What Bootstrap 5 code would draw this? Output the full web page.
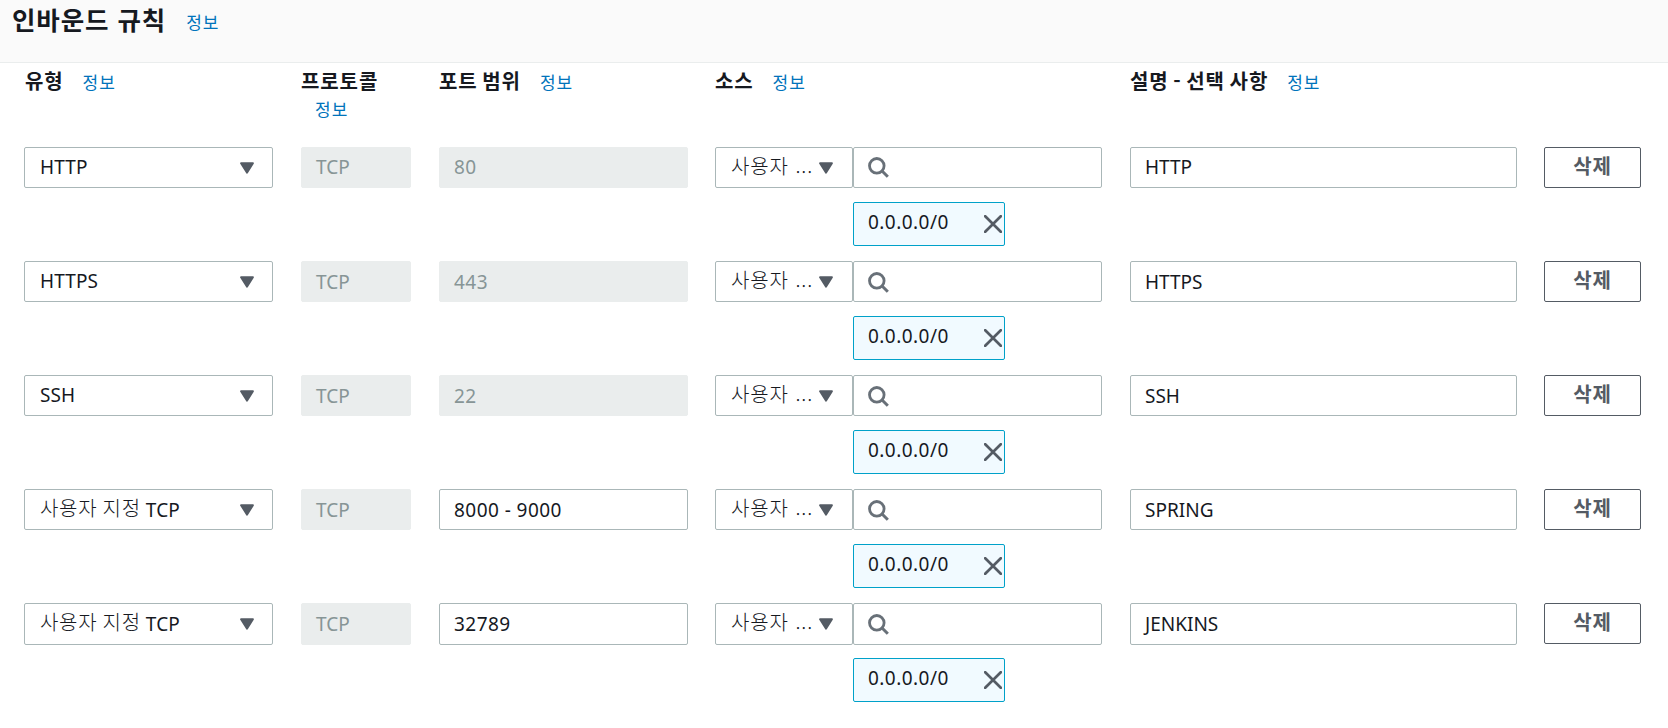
<!DOCTYPE html>
<html lang="ko">
<head>
<meta charset="utf-8">
<title>인바운드 규칙</title>
<link href="https://cdn.jsdelivr.net/npm/bootstrap@5.3.0/dist/css/bootstrap.min.css" rel="stylesheet">
<style>
body{font-family:"Noto Sans","Noto Sans CJK KR",sans-serif;font-size:19px;color:#16191f;background:#fff;overflow:hidden}
.ko{font-family:"Noto Sans CJK KR",sans-serif;letter-spacing:.9px;font-size:20px;line-height:28px}
.panel-head{height:63px;background:#fafafa;border-bottom:1px solid #eaeded;padding-left:12px}
.panel-title{font-family:"Noto Sans CJK KR",sans-serif;font-size:25.5px;font-weight:700;letter-spacing:.9px;line-height:38px;margin:0}
.info{font-family:"Noto Sans CJK KR",sans-serif;color:#0073bb;font-size:17px;letter-spacing:1px;text-decoration:none;line-height:28px}
.panel-head .info{margin:8px 0 0 20px}
.rule-grid{display:grid;grid-template-columns:277px 138px 276px 415px 414px 97px;padding-left:24px}
.heads{height:84px;padding-top:4px}
.heads .ko{font-weight:700;word-spacing:-1.8px}
.heads .info{margin-left:19px}
.heads .under{margin:-2px 0 0 14px;display:block}
.heads .ko.first{margin-left:1px}
.rule{height:114px}
.box{height:41px;border:1px solid #aab7b8;border-radius:2px;padding:0 14px;background:#fff;white-space:nowrap}
.box.off{background:#eaeded;border-color:#eaeded;color:#879596}
.rule:last-child .box{height:42px}
.rule:last-child .chip{margin-top:13px}
.rule:nth-child(n+2) .entry{padding-top:2px}
.rule:last-child .entry{padding-top:0}
.w-l{width:249px}.w-s{width:110px}.w-m{width:138px}.w-d{width:387px}
.box.pick{padding:0 18px 0 15px}
.w-m.pick{padding:0 19px 0 15px}
.num{letter-spacing:.45px}
.type-text{letter-spacing:.1px}
.thin{font-weight:300;position:relative;top:-1px}
.w-m .thin{top:-2px}
.type-text .thin{word-spacing:-1px;letter-spacing:.7px}
.chip{width:152px;height:44px;margin:14px 0 0 138px;border:1px solid #00a1c9;border-radius:2px;background:#f1faff;padding:0 2px 0 14px}
.chip .num{margin-top:-3px}
.del{height:41px;width:97px;border:1px solid #545b64;border-radius:2px;background:#fff;color:#545b64;font-weight:700;padding:0 0 3px}
</style>
</head>
<body>
<svg width="0" height="0" class="position-absolute">
<symbol id="tri" viewBox="0 0 14 12"><path d="M1 1.2h12L7 10.8z" fill="#545b64" stroke="#545b64" stroke-width="1.8" stroke-linejoin="round"/></symbol>
<symbol id="mag" viewBox="0 0 21 21"><circle cx="8.8" cy="8.8" r="7.3" fill="none" stroke="#687078" stroke-width="2.8"/><path d="M13.8 13.8l6 6" stroke="#687078" stroke-width="3"/></symbol>
<symbol id="x" viewBox="0 0 18 18"><path d="M1.2 1.2l15.6 15.6M16.8 1.2L1.2 16.8" stroke="#545b64" stroke-width="2.7" stroke-linecap="round"/></symbol>
</svg>
<header class="panel-head d-flex align-items-start">
<h2 class="panel-title">인바운드 규칙</h2><a class="info">정보</a>
</header>
<main>
<div class="rule-grid heads">
<div><span class="ko first">유형</span><a class="info">정보</a></div>
<div><span class="ko">프로토콜</span><a class="info under">정보</a></div>
<div><span class="ko">포트 범위</span><a class="info">정보</a></div>
<div><span class="ko">소스</span><a class="info">정보</a></div>
<div><span class="ko">설명 - 선택 사항</span><a class="info">정보</a></div>
</div>
<div id="rules"></div>
</main>
<script src="https://cdn.jsdelivr.net/npm/bootstrap@5.3.0/dist/js/bootstrap.bundle.min.js"></script>
<script>
const custom = '<span class="ko thin">사용자 지정</span>&nbsp;TCP';
const rules = [
  ['HTTP', '80', 'HTTP', true],
  ['HTTPS', '443', 'HTTPS', true],
  ['SSH', '22', 'SSH', true],
  [custom, '8000 - 9000', 'SPRING', false],
  [custom, '32789', 'JENKINS', false]
];
const tri = '<svg class="flex-shrink-0" width="14" height="12"><use href="#tri"/></svg>';
document.getElementById('rules').innerHTML = rules.map(([type, port, desc, locked]) => `
<div class="rule-grid rule">
  <div><div class="box pick w-l d-flex align-items-center justify-content-between"><span class="type-text">${type}</span>${tri}</div></div>
  <div><div class="box off entry w-s d-flex align-items-center">TCP</div></div>
  <div><div class="box entry w-l d-flex align-items-center num ${locked ? 'off' : ''}">${port}</div></div>
  <div>
    <div class="d-flex">
      <div class="box pick w-m d-flex align-items-center justify-content-between"><span class="ko thin">사용자 ...</span>${tri}</div>
      <div class="box entry w-l d-flex align-items-center"><svg width="21" height="21"><use href="#mag"/></svg></div>
    </div>
    <div class="chip d-flex align-items-center justify-content-between"><span class="num">0.0.0.0/0</span><svg width="18" height="18"><use href="#x"/></svg></div>
  </div>
  <div><div class="box entry w-d d-flex align-items-center">${desc}</div></div>
  <div><button class="btn del ko d-flex align-items-center justify-content-center">삭제</button></div>
</div>`).join('');
</script>
</body>
</html>
